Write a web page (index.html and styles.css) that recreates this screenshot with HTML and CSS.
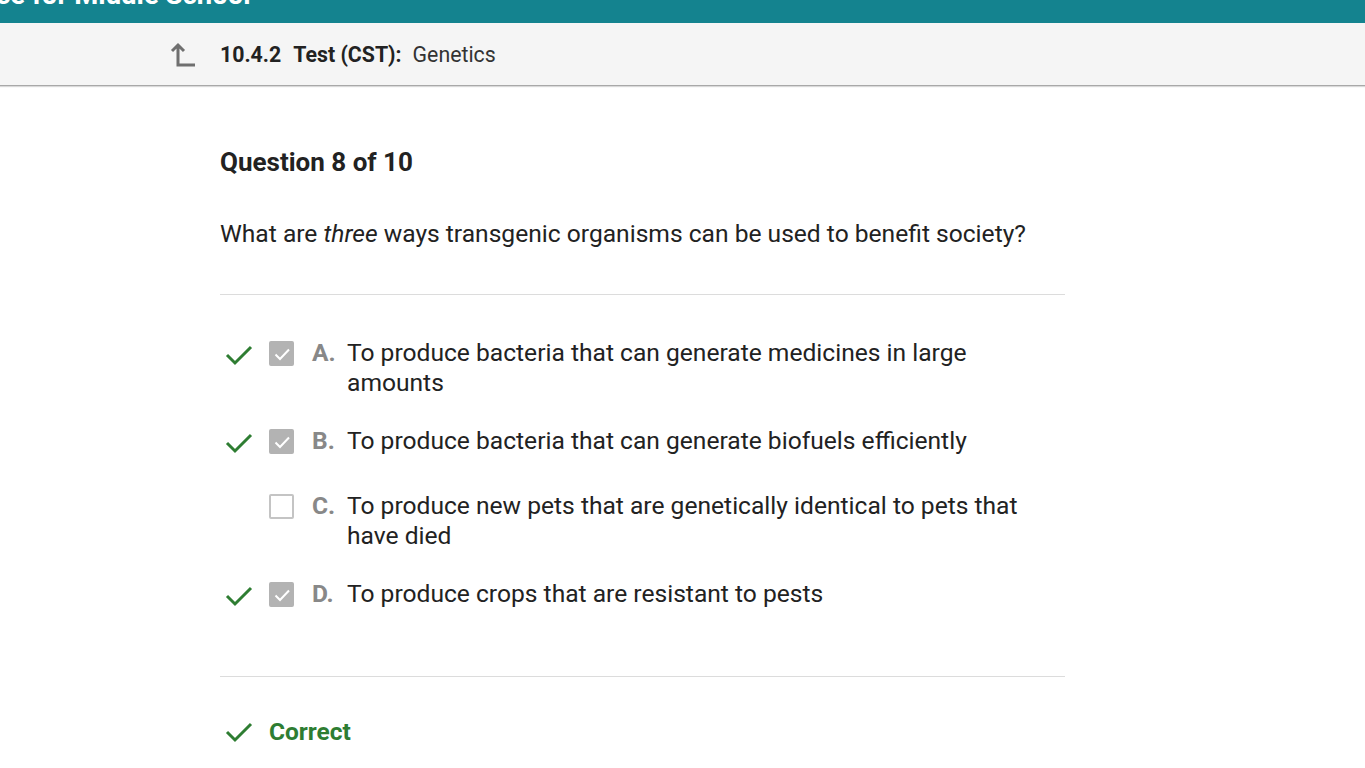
FILE: index.html
```html
<!DOCTYPE html>
<html>
<head>
<meta charset="utf-8">
<link rel="stylesheet" href="styles.css">
</head>
<body>
<div class="topbar"><span class="course">ce for Middle School</span></div>
<div class="header">
  <svg class="up" width="28" height="28" viewBox="0 0 28 28"><path d="M3 9 L9 3 L15 9 M9 3 V23 H26" fill="none" stroke="#6f6f6f" stroke-width="3"/></svg>
  <span class="num">10.4.2</span><span class="type">Test (CST):</span><span class="title">Genetics</span>
</div>
<main class="main">
  <h1 class="qhead">Question 8 of 10</h1>
  <p class="qtext">What are <em>three</em> ways transgenic organisms can be used to benefit society?</p>
  <hr class="rule">
  <ul class="options">
    <li class="opt">
      <span class="mark"><svg width="28" height="24" viewBox="0 0 28 24"><path d="M2 12 L10 20 L26 4" fill="none" stroke="#2e7d32" stroke-width="3"/></svg></span>
      <span class="box on"><svg width="18" height="18" viewBox="0 0 18 18"><path d="M2.5 9.5 L7 14 L16 4.5" fill="none" stroke="#fff" stroke-width="2"/></svg></span>
      <span class="letter">A.</span>
      <span class="txt">To produce bacteria that can generate medicines in large amounts</span>
    </li>
    <li class="opt">
      <span class="mark"><svg width="28" height="24" viewBox="0 0 28 24"><path d="M2 12 L10 20 L26 4" fill="none" stroke="#2e7d32" stroke-width="3"/></svg></span>
      <span class="box on"><svg width="18" height="18" viewBox="0 0 18 18"><path d="M2.5 9.5 L7 14 L16 4.5" fill="none" stroke="#fff" stroke-width="2"/></svg></span>
      <span class="letter">B.</span>
      <span class="txt">To produce bacteria that can generate biofuels efficiently</span>
    </li>
    <li class="opt">
      <span class="mark"></span>
      <span class="box"></span>
      <span class="letter">C.</span>
      <span class="txt">To produce new pets that are genetically identical to pets that have died</span>
    </li>
    <li class="opt">
      <span class="mark"><svg width="28" height="24" viewBox="0 0 28 24"><path d="M2 12 L10 20 L26 4" fill="none" stroke="#2e7d32" stroke-width="3"/></svg></span>
      <span class="box on"><svg width="18" height="18" viewBox="0 0 18 18"><path d="M2.5 9.5 L7 14 L16 4.5" fill="none" stroke="#fff" stroke-width="2"/></svg></span>
      <span class="letter">D.</span>
      <span class="txt">To produce crops that are resistant to pests</span>
    </li>
  </ul>
  <hr class="rule rule2">
  <div class="result">
    <span class="mark"><svg width="28" height="24" viewBox="0 0 28 24"><path d="M2 12 L10 20 L26 4" fill="none" stroke="#2e7d32" stroke-width="3"/></svg></span>
    <span class="correct">Correct</span>
  </div>
</main>
</body>
</html>
```
FILE: styles.css
```css
html, body {
  margin: 0;
  padding: 0;
  background: #fff;
  font-family: Roboto, "Liberation Sans", sans-serif;
  color: #222;
  overflow: hidden;
}
.topbar {
  height: 23px;
  background: #14838f;
  overflow: hidden;
}
.course {
  display: block;
  margin-top: -20px;
  margin-left: -4px;
  font-size: 27.5px;
  line-height: 30px;
  font-weight: 700;
  color: #fff;
  white-space: nowrap;
}
.header {
  height: 62px;
  background: #f5f5f5;
  border-bottom: 1px solid #a8a8a8;
  box-shadow: 0 1px 1px rgba(0,0,0,0.15);
  display: flex;
  align-items: center;
  padding-left: 169px;
  font-size: 21.3px;
}
.up {
  margin-right: 23px;
  margin-top: 3px;
}
.num {
  font-weight: 700;
  color: #222;
  margin-right: 12px;
}
.type {
  font-weight: 700;
  color: #222;
  margin-right: 11px;
}
.title {
  color: #333;
}
.main {
  width: 845px;
  margin-left: 220px;
}
.qhead {
  margin: 60px 0 0;
  font-size: 26px;
  line-height: 32px;
  font-weight: 700;
  color: #222;
}
.qtext {
  margin: 41px 0 0;
  font-size: 24.6px;
  line-height: 30px;
  color: #222;
}
.qtext em {
  font-style: italic;
}
.rule {
  margin: 45px 0 0;
  border: 0;
  border-top: 1px solid #dcdcdc;
  height: 0;
}
.options {
  list-style: none;
  margin: 43px 0 0;
  padding: 0;
  display: flex;
  flex-direction: column;
  gap: 28px;
}
.opt {
  display: flex;
  align-items: flex-start;
  min-height: 37px;
  font-size: 24.6px;
  line-height: 30px;
}
.mark {
  width: 49px;
  flex: none;
  display: flex;
  padding-top: 5px;
  padding-left: 5px;
  box-sizing: border-box;
}
.box {
  flex: none;
  border: 2px solid #c4c4c4;
  border-radius: 2px;
  margin-top: 3px;
  margin-right: 18px;
  display: flex;
  align-items: center;
  justify-content: center;
  box-sizing: content-box;
  width: 21px;
  height: 21px;
}
.box.on {
  background: #b3b3b3;
  border-color: #b3b3b3;
}
.letter {
  flex: none;
  width: 35px;
  font-weight: 700;
  color: #888;
}
.txt {
  color: #222;
  max-width: 690px;
}
.rule2 {
  margin-top: 60px;
}
.result {
  display: flex;
  align-items: center;
  margin-top: 40px;
}
.result .mark {
  padding-top: 0;
}
.correct {
  font-size: 24.5px;
  font-weight: 700;
  color: #2e7d32;
  line-height: 30px;
}
```
